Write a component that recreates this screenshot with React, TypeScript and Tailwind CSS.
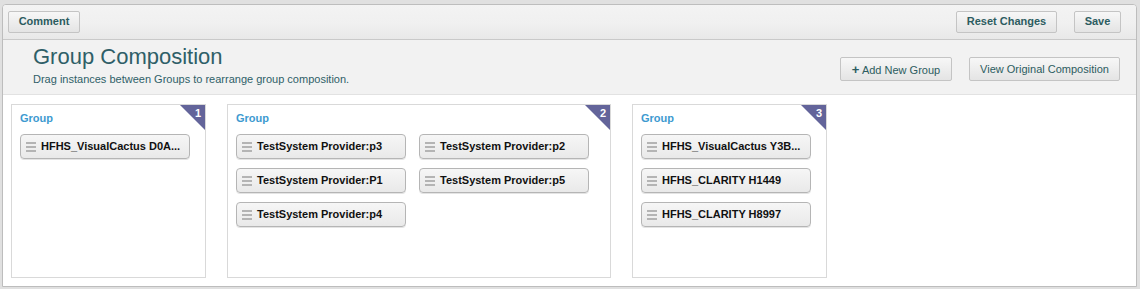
import React from "react";

function Handle() {
  return (
    <span className="flex flex-col gap-[2px] w-[10px] mr-[5px] shrink-0">
      <span className="h-[2px] bg-[#b4b4b4]" />
      <span className="h-[2px] bg-[#b4b4b4]" />
      <span className="h-[2px] bg-[#b4b4b4]" />
    </span>
  );
}

function Item({ label }: { label: string }) {
  return (
    <div className="w-[170px] h-[25px] flex items-center pl-[5px] pr-[5px] rounded-[4px] border border-[#b5b5b5] bg-[linear-gradient(#f6f6f6,#e9e9e9)] shadow-[0_1px_0_#e4e4e4]">
      <Handle />
      <span className="text-[11px] font-bold text-[#111] whitespace-nowrap">{label}</span>
    </div>
  );
}

function Group({ n, width, items, twoCol }: { n: number; width: string; items: string[]; twoCol?: boolean }) {
  return (
    <div className={`relative h-[174px] border border-[#d9d9d9] bg-white ${width}`}>
      <div className="absolute top-0 right-0 w-0 h-0 border-t-[25px] border-l-[25px] border-t-[#63649a] border-l-transparent" />
      <span className="absolute top-[1px] right-[4px] text-[11px] font-bold text-white leading-[14px]">{n}</span>
      <div className="pl-[8px] pt-[6px] text-[11px] font-bold text-[#3d9ad0] leading-[14px]">Group</div>
      <div className={`pl-[8px] pt-[9px] ${twoCol ? "grid grid-cols-[170px_170px] gap-x-[13px] gap-y-[9px]" : "flex flex-col gap-[9px]"}`}>
        {items.map((it) => (
          <Item key={it} label={it} />
        ))}
      </div>
    </div>
  );
}

function Btn({ children, bold, className }: { children: React.ReactNode; bold?: boolean; className?: string }) {
  return (
    <button
      className={`rounded-[2px] border border-[#c4c4c4] bg-[linear-gradient(#f7f7f7,#e4e4e4)] text-[11px] text-[#2c5c60] leading-none ${bold ? "font-bold" : ""} ${className ?? ""}`}
    >
      {children}
    </button>
  );
}

export default function App() {
  return (
    <div className="w-[1140px] h-[289px] bg-[#e0e0e0] pt-[4px] pl-[2px] pr-[3px] font-['Liberation_Sans',Arial,sans-serif] overflow-hidden">
      <div className="h-[283px] border border-[#bdbdbd] rounded-t-[4px] bg-white flex flex-col overflow-hidden">
        {/* toolbar */}
        <div className="h-[35px] shrink-0 flex items-center justify-between px-[5px] bg-[linear-gradient(#f3f3f3,#f0f0f0_55%,#e8e8e8)] border-b border-[#c9c9c9]">
          <Btn bold className="w-[72px] h-[22px] mb-[1px]">Comment</Btn>
          <div className="flex gap-[17px] mr-[10px]">
            <Btn bold className="w-[101px] h-[22px] mb-[1px]">Reset Changes</Btn>
            <Btn bold className="w-[47px] h-[22px] mb-[1px]">Save</Btn>
          </div>
        </div>
        {/* header */}
        <div className="h-[55px] shrink-0 flex justify-between bg-[#f2f2f2] border-b border-[#e2e2e2]">
          <div className="pl-[30px] pt-[4px]">
            <div className="text-[22px] text-[#2f5f68] leading-[26px]">Group Composition</div>
            <div className="text-[11px] text-[#2f5f68] leading-[13px] mt-[3px]">Drag instances between Groups to rearrange group composition.</div>
          </div>
          <div className="flex gap-[17px] pt-[17px] pr-[16px]">
            <Btn className="w-[112px] h-[24px]">
              <span className="font-bold text-[13px]">+</span> Add New Group
            </Btn>
            <Btn className="w-[151px] h-[24px]">View Original Composition</Btn>
          </div>
        </div>
        {/* content */}
        <div className="flex-1 flex gap-[21px] pl-[8px] pt-[9px] bg-white">
          <Group n={1} width="w-[195px]" items={["HFHS_VisualCactus D0A..."]} />
          <Group
            n={2}
            width="w-[384px]"
            twoCol
            items={[
              "TestSystem Provider:p3",
              "TestSystem Provider:p2",
              "TestSystem Provider:P1",
              "TestSystem Provider:p5",
              "TestSystem Provider:p4",
            ]}
          />
          <Group n={3} width="w-[195px]" items={["HFHS_VisualCactus Y3B...", "HFHS_CLARITY H1449", "HFHS_CLARITY H8997"]} />
        </div>
      </div>
    </div>
  );
}
